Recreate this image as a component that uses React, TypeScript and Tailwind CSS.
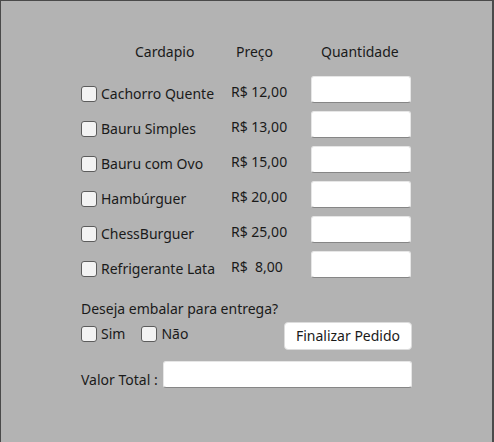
const items = [
  { name: 'Cachorro Quente', price: 'R$ 12,00' },
  { name: 'Bauru Simples', price: 'R$ 13,00' },
  { name: 'Bauru com Ovo', price: 'R$ 15,00' },
  { name: 'Hambúrguer', price: 'R$ 20,00' },
  { name: 'ChessBurguer', price: 'R$ 25,00' },
  { name: 'Refrigerante Lata', price: 'R$  8,00' },
];

function Check() {
  return <span className="block w-4 h-4 rounded-[3px] border border-[#5c5c5c] bg-[#f3f3f3]" />;
}

function Field({ className }: { className: string }) {
  return (
    <div
      className={`${className} h-[27px] bg-white rounded-[3px] border border-[#e6e6e6] border-b-[#868686]`}
    />
  );
}

export default function App() {
  return (
    <div className="w-[494px] h-[442px] bg-[#b3b3b3] border-l border-t border-r-2 border-[#4a4a4a] font-['Noto_Sans',sans-serif] text-[14px] leading-5 text-[#1a1a1a]">
      <div className="pl-[80px] pt-[41px]">
        {/* Header */}
        <div className="grid grid-cols-[150px_80px_100px]">
          <span className="pl-[54px]">Cardapio</span>
          <span className="pl-[5px]">Preço</span>
          <span className="pl-[10px]">Quantidade</span>
        </div>

        {/* Rows */}
        <div className="mt-[14px]">
          {items.map((it) => (
            <div key={it.name} className="grid grid-cols-[150px_80px_100px] h-[35px] items-start">
              <label className="mt-[8px] flex items-center gap-[4px] whitespace-nowrap">
                <Check />
                <span>{it.name}</span>
              </label>
              <span className="mt-[6px] whitespace-pre">{it.price}</span>
              <Field className="w-[100px]" />
            </div>
          ))}
        </div>

        {/* Embalar */}
        <p className="mt-[13px]">Deseja embalar para entrega?</p>
        <div className="mt-[3px] w-[331px] flex justify-between items-start">
          <div className="mt-[2px] flex items-center">
            <label className="flex items-center gap-[4px]">
              <Check />
              <span>Sim</span>
            </label>
            <label className="ml-[16px] flex items-center gap-[4px]">
              <Check />
              <span>Não</span>
            </label>
          </div>
          <button className="w-[128px] h-[28px] bg-white rounded-[4px] border border-[#dcdcdc]">
            Finalizar Pedido
          </button>
        </div>

        {/* Total */}
        <div className="mt-[11px] w-[331px] flex justify-between items-start">
          <span className="mt-[9px] whitespace-nowrap">Valor Total :</span>
          <Field className="w-[249px]" />
        </div>
      </div>
    </div>
  );
}
